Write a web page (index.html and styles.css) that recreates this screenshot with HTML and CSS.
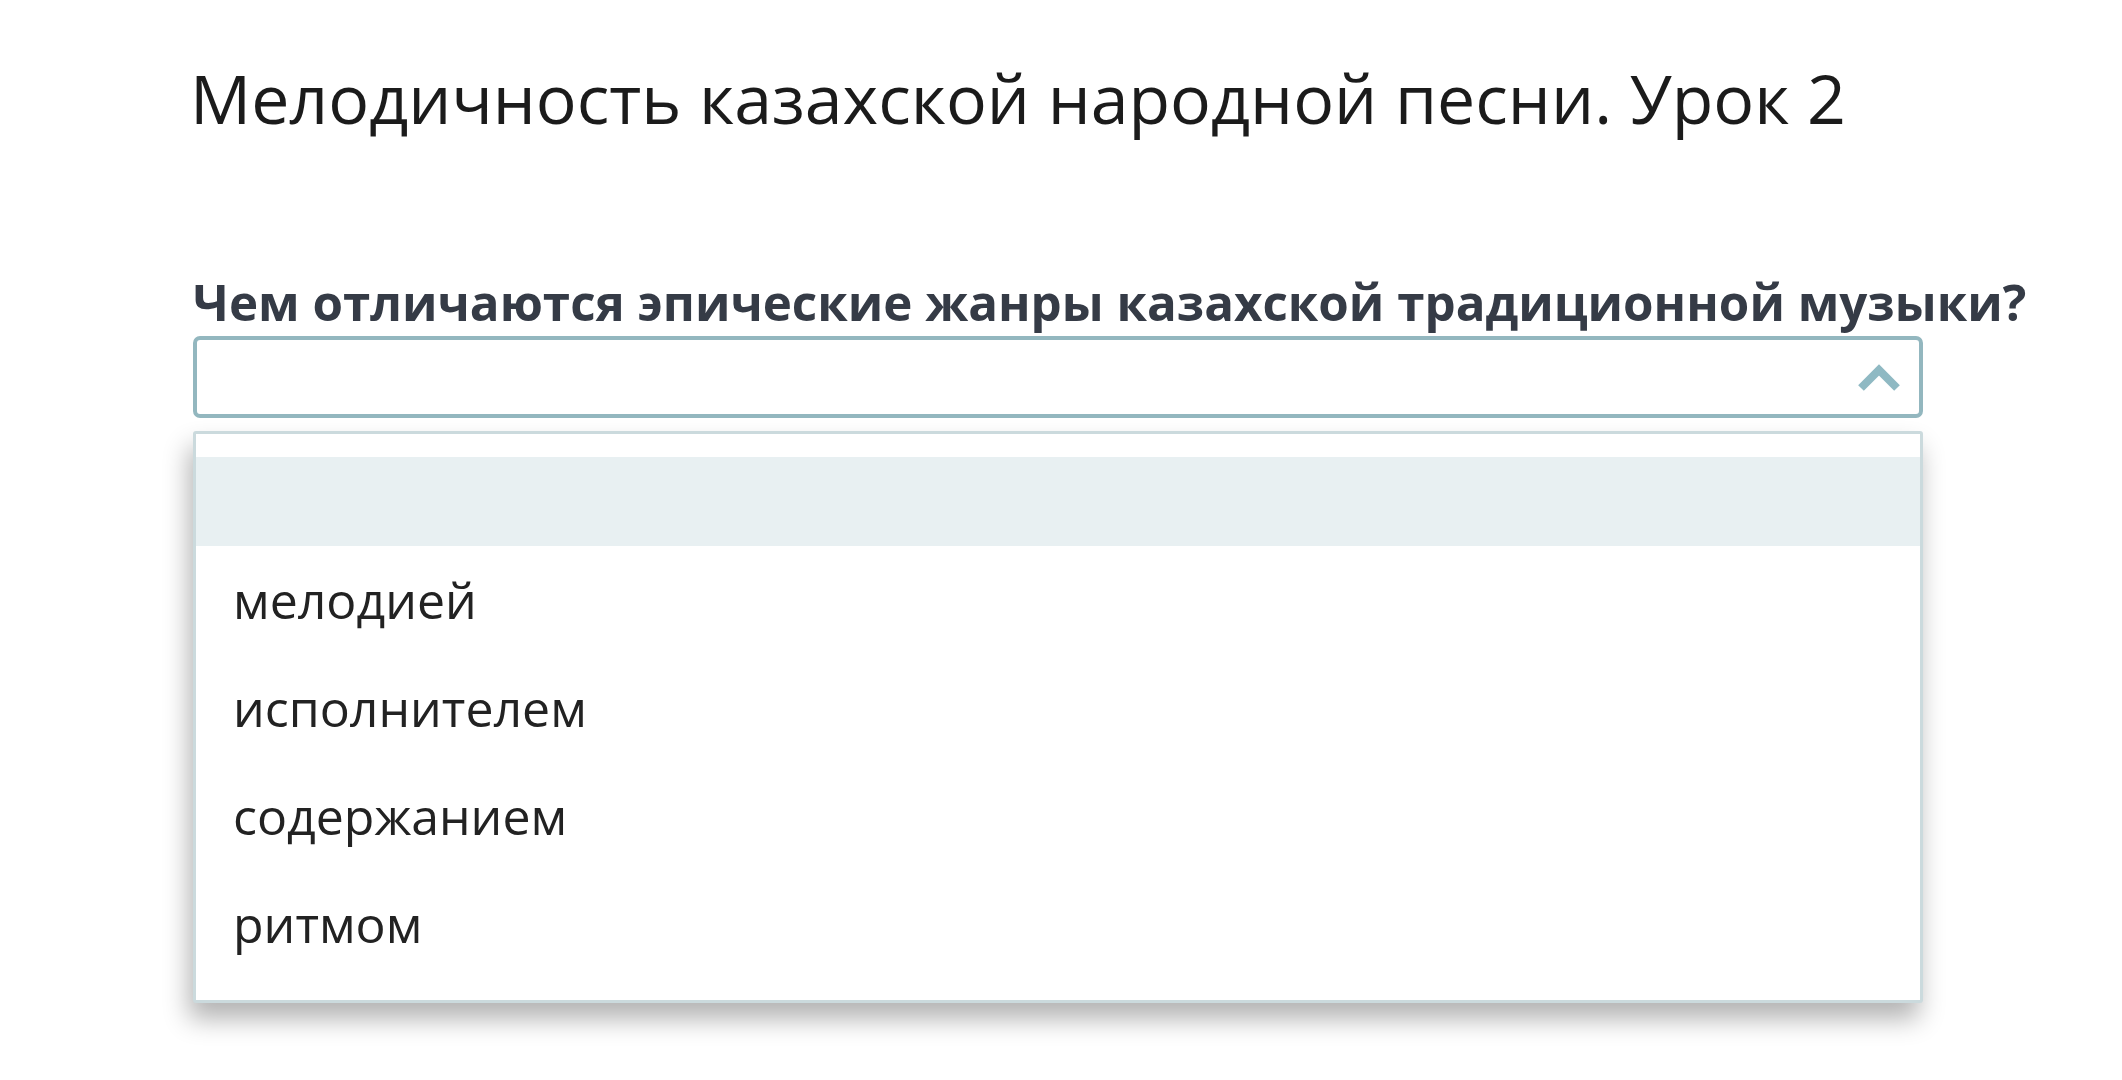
FILE: index.html
```html
<!DOCTYPE html>
<html lang="ru">
<head>
<meta charset="utf-8">
<link rel="stylesheet" href="styles.css">
</head>
<body>
<main class="page">
  <h1 class="title">Мелодичность казахской народной песни. Урок 2</h1>
  <section class="question">
    <div class="q-text">Чем отличаются эпические жанры казахской традиционной музыки?</div>
    <div class="select">
      <svg class="chev" width="44" height="28" viewBox="0 0 44 28"><path d="M4 24 L22 6 L40 24" fill="none" stroke="#8fb9c3" stroke-width="8" stroke-linejoin="miter"/></svg>
    </div>
    <ul class="dropdown">
      <li class="opt empty"></li>
      <li class="opt">мелодией</li>
      <li class="opt">исполнителем</li>
      <li class="opt">содержанием</li>
      <li class="opt">ритмом</li>
    </ul>
  </section>
</main>
</body>
</html>
```
FILE: styles.css
```css
html, body {
  margin: 0;
  padding: 0;
  background: #ffffff;
}
.page {
  padding: 48px 0 70px 190px;
  width: 1736px;
  font-family: "Open Sans", "Noto Sans", sans-serif;
}
.title {
  margin: 0;
  font-weight: 400;
  font-size: 68px;
  line-height: 100px;
  color: #1b1b1b;
}
.question {
  margin-top: 124px;
}
.q-text {
  font-weight: 700;
  font-size: 49.3px;
  line-height: 60px;
  color: #353b46;
  white-space: nowrap;
  padding-left: 3px;
}
.select {
  margin: 4px 0 0 3px;
  height: 74px;
  border: 4px solid #93b7bf;
  border-radius: 7px;
  display: flex;
  align-items: center;
  justify-content: flex-end;
  padding-right: 18px;
  box-sizing: content-box;
  width: 1704px;
}
.chev {
  display: block;
  margin-top: 2px;
}
.dropdown {
  list-style: none;
  margin: 13px 0 0 3px;
  padding: 23px 0 22px;
  width: 1724px;
  border: 3px solid #cbdadd;
  border-radius: 3px;
  background: #fff;
  box-shadow: -4px 16px 26px rgba(0, 0, 0, 0.3);
}
.opt {
  height: 108px;
  line-height: 108px;
  padding-left: 37px;
  font-size: 50px;
  color: #222;
}
.opt.empty {
  height: 89px;
  background: #e8f0f2;
}
```
